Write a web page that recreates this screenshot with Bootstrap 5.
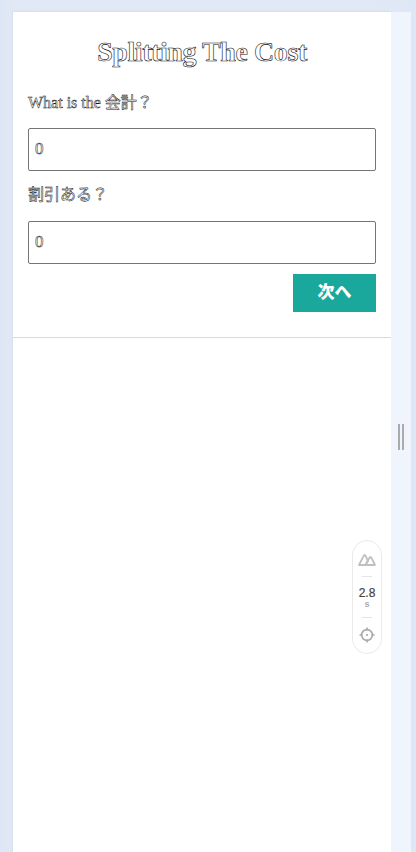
<!DOCTYPE html>
<html lang="ja">
<head>
<meta charset="utf-8">
<meta name="viewport" content="width=device-width, initial-scale=1">
<title>Splitting The Cost</title>
<link href="https://cdn.jsdelivr.net/npm/bootstrap@5.3.0/dist/css/bootstrap.min.css" rel="stylesheet">
<style>
body{background:#e0e8f6;font-family:"Liberation Serif","Noto Sans CJK JP",serif;color:#222}
.device{height:852px;padding:12px 5px 0 13px;background:linear-gradient(90deg,#dde6f5,#e1e8f6 13px,#e0e8f6 400px,#dce7f7)}
.screen{width:378px;box-shadow:0 0 2px #c8cfda}
.rail{width:20px;background:#f0f4fd;padding-top:412px;gap:2px;z-index:1}
.grip{width:2px;height:26px;background:#aaabad}
.split-form{height:326px;padding:23px 15px 0;border-bottom:1px solid #d9d9d9}
.title{font-size:28px;line-height:34px;height:58px;font-weight:700;letter-spacing:-.43px;color:#fff;-webkit-text-stroke:.6px #111}
.field-label{font-size:16px;line-height:20px;height:35px;color:#fff;-webkit-text-stroke:.5px #111}
.field-label.second{padding-top:14px;height:50px}
.amount{height:43px;padding:0 6px 2px;border:1px solid #767676;border-radius:2px;font-size:17px;-webkit-text-stroke:.5px #111}
.amount,.amount:focus{color:#fff}
.amount:focus{border-color:#767676;box-shadow:none}
.actions{padding-top:10px}
.next{width:83px;height:38px;background:#1aa79c!important;font-size:17px;font-weight:900;padding:0 0 1px;border:0}
.perf{right:34px;top:540px;width:30px;height:114px;border:1px solid #eaeaea;border-radius:15px;font-family:"Liberation Sans",sans-serif;background:#fff}
.peaks{margin:12px 0 9px}
.rule{width:10px;height:1px;background:#e5e5e5}
.secs{font-size:12px;line-height:13px;margin-top:10px;color:#444;-webkit-text-stroke:.2px #444}
.unit{font-size:9px;line-height:9px;margin-bottom:8px;font-weight:700;color:#aaa}
.target{margin-top:9px}
</style>
</head>
<body>
<div class="device d-flex position-relative overflow-hidden">
  <main class="screen bg-white flex-shrink-0">
    <form class="split-form">
      <h1 class="title text-center mb-0">Splitting The Cost</h1>
      <label class="field-label d-block" for="bill">What is the 会計？</label>
      <input class="amount form-control" id="bill" value="0">
      <label class="field-label d-block second" for="discount">割引ある？</label>
      <input class="amount form-control" id="discount" value="0">
      <div class="d-flex justify-content-end actions"><button class="next btn rounded-0 text-white" type="button">次へ</button></div>
    </form>
  </main>
  <aside class="rail d-flex align-items-start justify-content-center flex-shrink-0">
    <span class="grip"></span><span class="grip"></span>
  </aside>
  <div class="perf position-absolute d-flex flex-column align-items-center">
    <svg class="peaks flex-shrink-0" width="20" height="14" viewBox="0 0 20 14" fill="none" stroke="#c0c0c0" stroke-width="1.8" stroke-linejoin="round"><path d="M2 12 7 2.2 8.2 2.2 11 8 8.4 12Z"/><path d="M8.4 12 12.8 4.2 14 4.2 18 12Z"/></svg>
    <span class="rule"></span>
    <span class="secs">2.8</span>
    <span class="unit">s</span>
    <span class="rule"></span>
    <svg class="target flex-shrink-0" width="16" height="16" viewBox="0 0 16 16" fill="none" stroke="#aaa" stroke-width="1.6"><circle cx="8" cy="8" r="5.4"/><path d="M8 .5v3M8 12.5v3M.5 8h3M12.5 8h3"/><circle cx="8" cy="8" r="1.1" fill="#aaa" stroke="none"/></svg>
  </div>
</div>
<script src="https://cdn.jsdelivr.net/npm/bootstrap@5.3.0/dist/js/bootstrap.bundle.min.js"></script>
</body>
</html>
